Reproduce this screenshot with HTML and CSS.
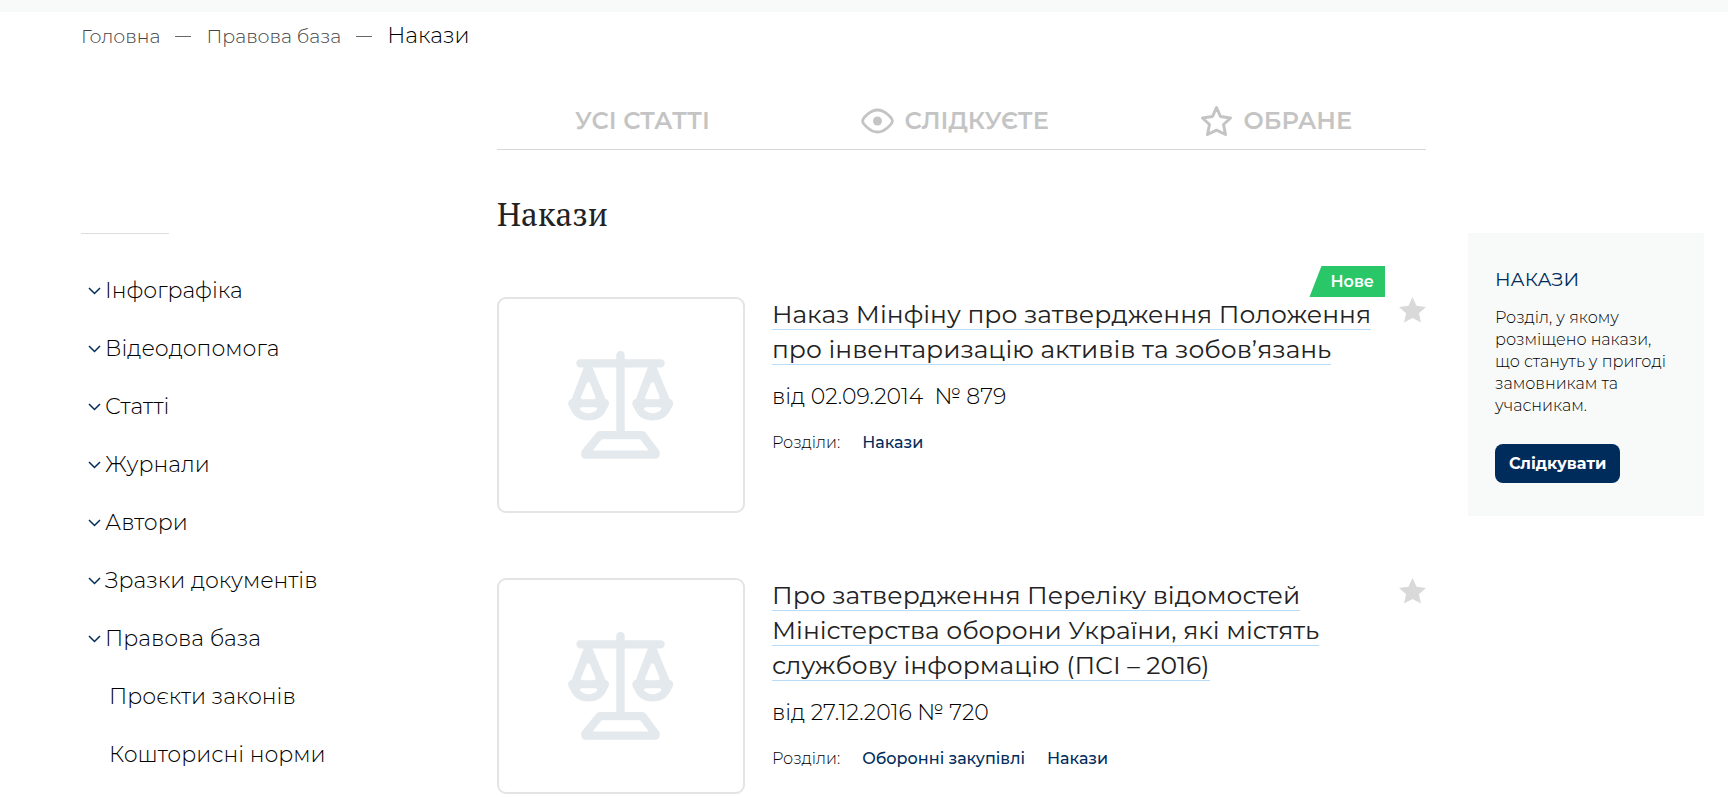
FILE: index.html
```html
<!DOCTYPE html>
<html lang="uk">
<head>
  <meta charset="UTF-8">
  <meta name="viewport" content="width=device-width, initial-scale=1.0">
  <title>Накази</title>
  <link rel="stylesheet" href="styles.css">
</head>
<body>

  <svg class="sprite" aria-hidden="true">
    <symbol id="chevron" viewBox="0 0 12 8">
      <path d="M.5 1 6 6.500 11.500 1" fill="none" stroke="currentColor" stroke-width="1.500"/>
    </symbol>
    <symbol id="star" viewBox="0 0 27 26">
      <path d="M13.5 0 17.5 8.8 27 9.9 19.9 16.3 22 25.5 13.5 21 5 25.5 7.1 16.3 0 9.9 9.5 8.8z" fill="currentColor"/>
    </symbol>
    <symbol id="scales" viewBox="234 212 318 325">
      <g fill="none" stroke="currentColor" stroke-linejoin="round" stroke-linecap="round">
        <path d="M391.500 224V460M271 249H512" stroke-width="25"/>
        <path d="M329 465H457L497 518V524H286V518z" stroke-width="25"/>
      </g>
      <path id="pan" fill="currentColor" fill-rule="evenodd" d="M283 256H305L346 356Q357 360 357 370Q356 378 351 384C342 408 322 421 295.500 421C269 421 249 408 240 384Q235 378 234 370Q234 360 245 356zM290 309 273 350Q271 357 277 357H311Q318 357 316 350L300 309Q295 303 290 309zM275 381Q267 382 270 388C277 396 286 399 295.500 399C305 399 314 396 321 388Q323 382 316 381z"/>
      <use href="#pan" x="193"/>
    </symbol>
  </svg>

  <div class="top-bar"></div>

  <nav class="breadcrumbs" aria-label="Навігація">
    <a href="#">Головна</a>
    <span class="dash"></span>
    <a href="#">Правова база</a>
    <span class="dash"></span>
    <span class="current">Накази</span>
  </nav>

  <div class="layout">
    <aside class="sidebar">
      <ul class="menu">
        <li><a href="#"><svg class="chevron"><use href="#chevron"/></svg>Інфографіка</a></li>
        <li><a href="#"><svg class="chevron"><use href="#chevron"/></svg>Відеодопомога</a></li>
        <li><a href="#"><svg class="chevron"><use href="#chevron"/></svg>Статті</a></li>
        <li><a href="#"><svg class="chevron"><use href="#chevron"/></svg>Журнали</a></li>
        <li><a href="#"><svg class="chevron"><use href="#chevron"/></svg>Автори</a></li>
        <li><a href="#"><svg class="chevron"><use href="#chevron"/></svg>Зразки документів</a></li>
        <li>
          <a href="#"><svg class="chevron"><use href="#chevron"/></svg>Правова база</a>
          <ul class="submenu">
            <li><a href="#">Проєкти законів</a></li>
            <li><a href="#">Кошторисні норми</a></li>
          </ul>
        </li>
      </ul>
    </aside>

    <main class="content">
      <nav class="tabs">
        <a href="#">УСІ СТАТТІ</a>
        <a href="#">
          <svg class="tab-icon" viewBox="0 0 33 32">
            <path d="M1.600 16C1.600 13.500 9 5 16.500 5S31.400 13.500 31.400 16 24 27 16.500 27 1.600 18.500 1.600 16z" fill="none" stroke="currentColor" stroke-width="2.800"/>
            <circle cx="16.500" cy="16" r="4.500" fill="currentColor"/>
          </svg>
          СЛІДКУЄТЕ
        </a>
        <a href="#">
          <svg class="tab-icon" viewBox="0 0 33 32">
            <path d="M16.500 2.500 20.500 11.500 30.500 13 23.500 19.500 25.500 29.500 16.500 25.200 7.500 29.500 9.500 19.500 2.500 13 12.500 11.500z" fill="none" stroke="currentColor" stroke-width="3" stroke-linejoin="round"/>
          </svg>
          ОБРАНЕ
        </a>
      </nav>

      <h1>Накази</h1>

      <article class="card">
        <div class="thumb"><svg class="scales"><use href="#scales"/></svg></div>
        <div class="card-body">
          <span class="badge">Нове</span>
          <h2><a href="#">Наказ Мінфіну про затвердження Положення про інвентаризацію активів та зобов’язань</a></h2>
          <p class="date">від 02.09.2014&nbsp; № 879</p>
          <div class="sections">
            <span>Розділи:</span>
            <a href="#">Накази</a>
          </div>
        </div>
        <button class="fav" aria-label="Додати в обране"><svg><use href="#star"/></svg></button>
      </article>

      <article class="card">
        <div class="thumb"><svg class="scales"><use href="#scales"/></svg></div>
        <div class="card-body">
          <h2><a href="#">Про затвердження Переліку відомостей Міністерства оборони України, які містять службову інформацію (ПСІ – 2016)</a></h2>
          <p class="date">від 27.12.2016 № 720</p>
          <div class="sections">
            <span>Розділи:</span>
            <a href="#">Оборонні закупівлі</a>
            <a href="#">Накази</a>
          </div>
        </div>
        <button class="fav" aria-label="Додати в обране"><svg><use href="#star"/></svg></button>
      </article>
    </main>

    <aside class="info">
      <h3>НАКАЗИ</h3>
      <p>Розділ, у якому розміщено накази, що стануть у пригоді замовникам та учасникам.</p>
      <button class="follow">Слідкувати</button>
    </aside>
  </div>

</body>
</html>
```
FILE: styles.css
```css
* {
  box-sizing: border-box;
}

body {
  margin: 0;
  background: #fff;
  color: #222;
  font-family: Montserrat, Inter, 'Open Sans', sans-serif;
  font-weight: 300;
}

a {
  color: inherit;
  text-decoration: none;
}

ul {
  list-style: none;
  margin: 0;
  padding: 0;
}

.sprite {
  position: absolute;
  width: 0;
  height: 0;
}

.top-bar {
  height: 12px;
  background: #f8faf9;
}

.breadcrumbs {
  display: flex;
  align-items: baseline;
  gap: 15px;
  padding: 8px 24px 0 81px;
  font-size: 19px;
  line-height: 32px;
  color: #444;
}

.breadcrumbs .dash {
  width: 16px;
  height: 1px;
  background: #666;
  align-self: center;
}

.breadcrumbs .current {
  font-size: 22px;
  color: #000;
}

.layout {
  display: grid;
  grid-template-columns: 374px 1fr 236px;
  column-gap: 42px;
  align-items: start;
  padding: 39px 24px 0 81px;
}

/* sidebar */
.sidebar {
  margin-top: 141px;
}

.sidebar::before {
  content: "";
  display: block;
  width: 88px;
  height: 1px;
  background: #ddd;
}

.menu {
  padding: 28px 0 0 7px;
  font-size: 22px;
  line-height: 58px;
  color: #000;
}

.menu a {
  display: flex;
  align-items: center;
  gap: 4px;
}

.chevron {
  width: 13px;
  height: 8px;
  color: #002c5c;
}

.submenu {
  padding-left: 21px;
}

/* tabs */
.tabs {
  display: flex;
  justify-content: space-between;
  padding: 12px 74px 12px 78px;
  border-bottom: 1px solid #d8d8d8;
  color: #c4c4c4;
  font-size: 24px;
  font-weight: 600;
  line-height: 33px;
}

.tabs a {
  display: flex;
  align-items: center;
  gap: 11px;
}

.tab-icon {
  width: 33px;
  height: 32px;
}

h1 {
  margin: 41px 0 60px;
  font-family: 'PT Serif', 'Liberation Serif', serif;
  font-size: 33px;
  font-weight: 400;
  line-height: 46px;
}

/* article cards */
.card {
  display: flex;
  align-items: flex-start;
  margin-bottom: 65px;
}

.card:last-child {
  margin-bottom: 0;
}

.thumb {
  display: flex;
  align-items: center;
  justify-content: center;
  flex: none;
  width: 248px;
  height: 216px;
  margin-right: 27px;
  border: 2px solid #e4e4e4;
  border-radius: 9px;
}

.scales {
  width: 106px;
  height: 108px;
  color: #e4e9ed;
}

.card-body {
  position: relative;
  flex: 1;
  margin-right: 14px;
}

.badge {
  position: absolute;
  right: 0;
  bottom: 100%;
  padding: 0 11px 0 21px;
  background: #2ac769;
  clip-path: polygon(12px 0, 100% 0, 100% 100%, 0 100%);
  color: #fff;
  font-size: 16px;
  font-weight: 600;
  line-height: 31px;
}

h2 {
  margin: 0;
  font-size: 25px;
  font-weight: 400;
  line-height: 35px;
}

h2 a {
  border-bottom: 1px solid #b9dcf9;
}

.date {
  margin: 14px 0;
  color: #000;
  font-size: 22px;
  line-height: 32px;
}

.sections {
  display: flex;
  gap: 22px;
  color: #000;
  font-size: 16px;
  line-height: 32px;
}

.sections a {
  color: #002c5c;
  font-weight: 500;
}

.fav {
  width: 27px;
  height: 26px;
  padding: 0;
  border: none;
  background: none;
  color: #d9d9d9;
  cursor: pointer;
}

.fav svg {
  display: block;
  width: 27px;
  height: 26px;
}

/* info block */
.info {
  margin-top: 141px;
  padding: 35px 27px 33px;
  background: #f8faf9;
}

.info h3 {
  margin: 0 0 15px;
  color: #002c5c;
  font-size: 19px;
  font-weight: 400;
  line-height: 24px;
}

.info p {
  margin: 0 0 27px;
  color: #000;
  font-size: 16px;
  line-height: 22px;
}

.follow {
  padding: 0 14px;
  border: none;
  border-radius: 8px;
  background: #002c5c;
  color: #fff;
  font-family: inherit;
  font-size: 16px;
  font-weight: 700;
  line-height: 39px;
  cursor: pointer;
}
```
